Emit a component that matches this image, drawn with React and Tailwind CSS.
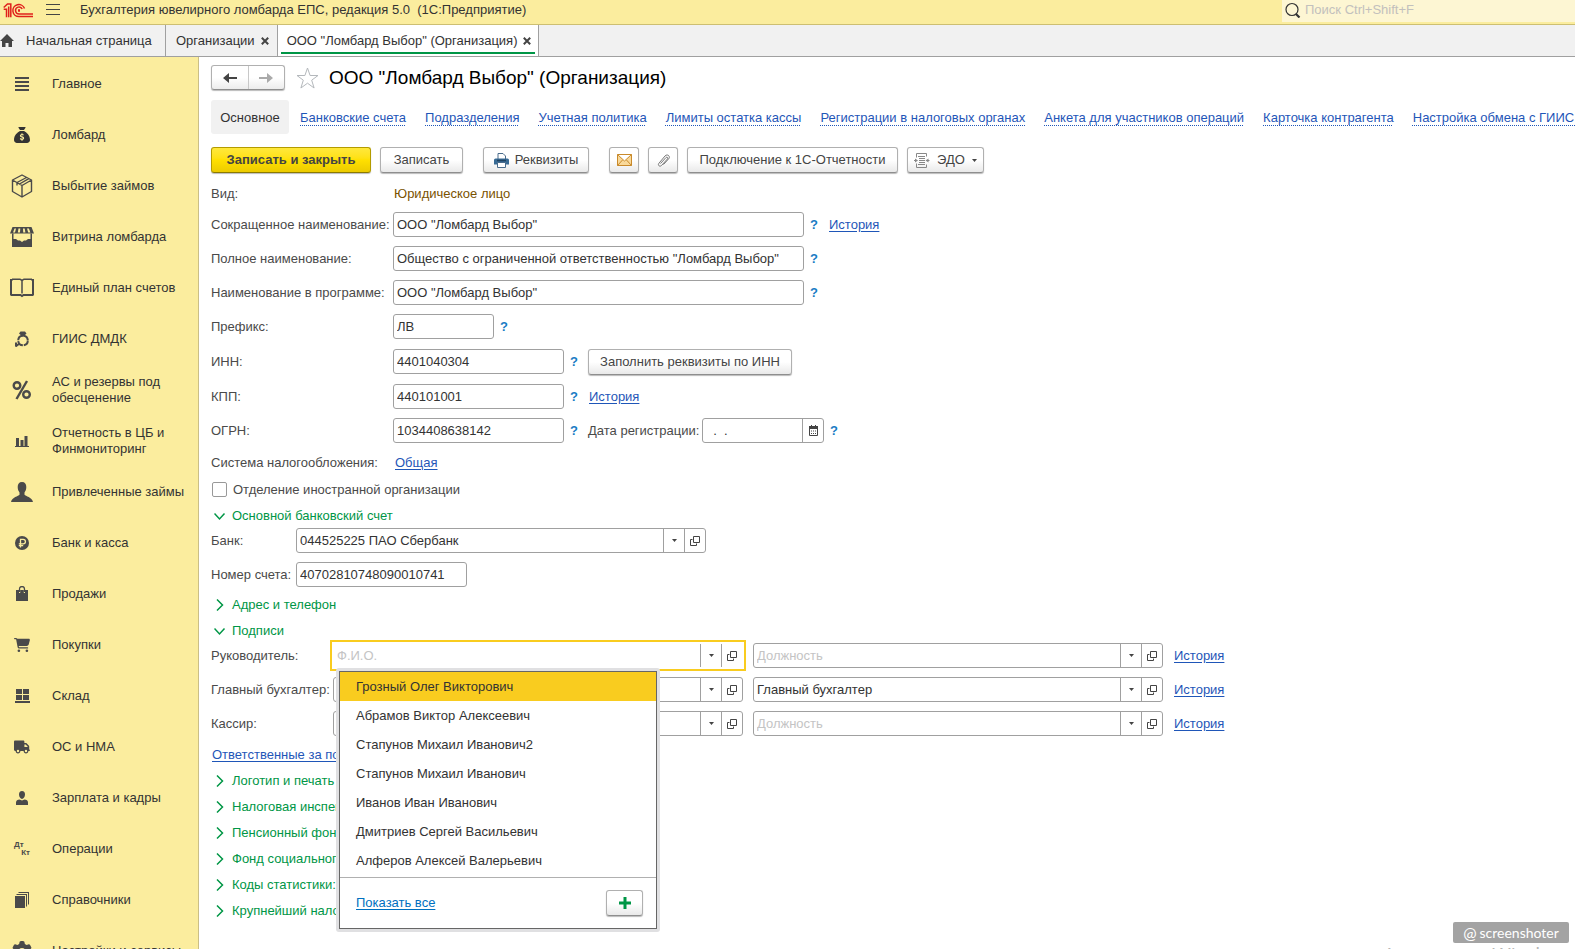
import { useState } from 'react';
import { FaCartShopping, FaGear, FaSackDollar, FaTruck } from 'react-icons/fa6';

const menu = [
  { label: 'Главное', icon: 'list' },
  { label: 'Ломбард', icon: 'sack' },
  { label: 'Выбытие займов', icon: 'box' },
  { label: 'Витрина ломбарда', icon: 'shop' },
  { label: 'Единый план счетов', icon: 'book' },
  { label: 'ГИИС ДМДК', icon: 'ring' },
  { label: 'АС и резервы под обесценение', icon: 'percent' },
  { label: 'Отчетность в ЦБ и Финмониторинг', icon: 'chart' },
  { label: 'Привлеченные займы', icon: 'bust' },
  { label: 'Банк и касса', icon: 'ruble' },
  { label: 'Продажи', icon: 'bag' },
  { label: 'Покупки', icon: 'cart' },
  { label: 'Склад', icon: 'stock' },
  { label: 'ОС и НМА', icon: 'truck' },
  { label: 'Зарплата и кадры', icon: 'person' },
  { label: 'Операции', icon: 'dtkt' },
  { label: 'Справочники', icon: 'books' },
  { label: 'Настройки и сервисы', icon: 'gear' },
];

const sections = [
  'Банковские счета',
  'Подразделения',
  'Учетная политика',
  'Лимиты остатка кассы',
  'Регистрации в налоговых органах',
  'Анкета для участников операций',
  'Карточка контрагента',
  'Настройка обмена с ГИИС ДМДК',
];

const people = [
  'Грозный Олег Викторович',
  'Абрамов Виктор Алексеевич',
  'Стапунов Михаил Иванович2',
  'Стапунов Михаил Иванович',
  'Иванов Иван Иванович',
  'Дмитриев Сергей Васильевич',
  'Алферов Алексей Валерьевич',
];

const closedGroups = [
  'Логотип и печать',
  'Налоговая инспекция',
  'Пенсионный фонд',
  'Фонд социального страхования',
  'Коды статистики:',
  'Крупнейший налогоплательщик',
];

function MenuIcon({ name }) {
  switch (name) {
    case 'sack':
      return <FaSackDollar className="size-4 text-[#333]" />;
    case 'cart':
      return <FaCartShopping className="size-4" />;
    case 'truck':
      return <FaTruck className="size-4" />;
    case 'gear':
      return <FaGear className="size-5" />;
    case 'list':
      return (
        <svg width="14" height="14" fill="currentColor">
          <path d="M0 0h14v2H0zM0 4h14v2H0zM0 8h14v2H0zM0 12h14v2H0z" />
        </svg>
      );
    case 'box':
      return (
        <svg width="22" height="24" fill="none" stroke="currentColor" strokeWidth="1.400" strokeLinejoin="round">
          <path d="M11 1l9.500 5v11.500L11 23l-9.500-5.500V6zM1.500 6L11 11.500 20.500 6M11 11.500V23M15.500 3.500L6 8.500v3M17.800 4.700L8.500 10" />
        </svg>
      );
    case 'shop':
      return (
        <svg width="24" height="20" fill="currentColor">
          <path
            fillRule="evenodd"
            d="M2.500 0h19L24 6.500H0zM4.500 1.500L3 5.500h2l1-4zM8.500 1.500l-.7 4H10l.3-4zM13 1.500l.2 4h2.200l-.7-4zM17 1.500l1.200 4h2.200l-1.500-4z"
          />
          <path d="M2 6.500h1.500V12H6l2 1.500h2l2 1.500 2-1.500h2l2-1.500h2.500V6.500H22V20H2z" />
        </svg>
      );
    case 'book':
      return (
        <svg width="24" height="20" fill="none" stroke="currentColor">
          <path d="M1 17.500V2h1.500M23 17.500V2h-1.500M1 17h9.500l1.500 1 1.500-1H23" strokeWidth="2" />
          <path d="M2 1.200h8l2 1.300 2-1.300h8M12 2v13.500" strokeWidth="1.500" />
        </svg>
      );
    case 'ring':
      return (
        <svg width="16" height="16" fill="none" stroke="currentColor" strokeWidth="2">
          <circle cx="9" cy="9.500" r="4.800" strokeDasharray="6.500 1" />
          <path d="M6.500.5h4.500L12.500 2.500 8.800 6 5 2.500z" fill="currentColor" stroke="none" />
          <path d="M5.500 12.500L1.500 15.500M2 11.500v4" />
        </svg>
      );
    case 'percent':
      return (
        <svg width="20" height="20" fill="none" stroke="currentColor" strokeWidth="2.400">
          <circle cx="5" cy="5.500" r="3.300" />
          <circle cx="14.500" cy="14.500" r="3.300" />
          <path d="M15 1L4.500 19" />
        </svg>
      );
    case 'chart':
      return (
        <svg width="14" height="12" fill="currentColor">
          <path d="M0 11h14v1H0zM1 3h3v8H1zM5.500 5h3v6h-3zM9.500 1h3v10h-3z" />
        </svg>
      );
    case 'bust':
      return (
        <svg width="22" height="20" fill="currentColor">
          <path d="M11 0c3 0 4.300 2 4.300 5 0 2.500-.8 4-1.800 5.500v2.200c1 1.600 7.500 2.300 8.500 7.300H0c1-5 7.500-5.700 8.500-7.300v-2.200C7.500 9 6.700 7.500 6.700 5c0-3 1.300-5 4.300-5z" />
        </svg>
      );
    case 'ruble':
      return (
        <svg width="14" height="14">
          <circle cx="7" cy="7" r="7" fill="currentColor" />
          <path d="M5.500 11.500V3.300h2.700a2.200 2.200 0 010 4.500H3.800M3.800 9.600h4.400" fill="none" stroke="#fbed9e" strokeWidth="1.300" />
        </svg>
      );
    case 'bag':
      return (
        <svg width="12" height="15" fill="currentColor">
          <path d="M0 4h3v3h1.200V4h3.600v3H9V4h3v11H0z" />
          <path d="M3.500 6V3a2.500 2.500 0 015 0v3" fill="none" stroke="currentColor" strokeWidth="1.300" />
        </svg>
      );
    case 'stock':
      return (
        <svg width="15" height="14" fill="currentColor">
          <path d="M1 0h6v5H1zM8 0h6v5H8zM1 6h6v5H1zM8 6h6v5H8zM0 12h15v2H0z" />
        </svg>
      );
    case 'person':
      return (
        <svg width="12" height="14" fill="currentColor">
          <path d="M6 0c2 0 3 1.300 3 3.500S7.500 8 6 8 3 5.700 3 3.500 4 0 6 0zM0 14v-2.500C0 9.500 1.500 8.500 3.500 8.500L6 9.500l2.500-1c2 0 3.500 1 3.500 3V14z" />
        </svg>
      );
    case 'dtkt':
      return (
        <span className="flex w-4 flex-col text-[8px] leading-[8px] font-bold">
          <span>Дт</span>
          <span className="self-end">Кт</span>
        </span>
      );
    default:
      return (
        <svg width="14" height="16" fill="currentColor">
          <path d="M0 4h10v12H0zM1.500 2H12v12.500h-1V3H1.500zM3.500 0H14v12.500h-1V1H3.500z" />
        </svg>
      );
  }
}

function Logo() {
  return (
    <svg width="30" height="15" viewBox="0 0 30 15" fill="none" stroke="#e0201c" strokeWidth="1.500" aria-label="1С">
      <path d="M.7 4.500L4.500 1h3.300v13.300M.7 6.200h2.800v8.100M5.700 3.500v10.800" />
      <path d="M21.500 5.500A6 6 0 1016 13.600h14" />
      <path d="M19.200 6A3.500 3.500 0 1016 11h14" />
      <path d="M15 7.500h2" strokeWidth="2.500" />
    </svg>
  );
}

const plain = 'border-[#b0b0b0] border-b-[#8e8e8e] bg-linear-to-b from-white from-50% to-[#e9e9e9] text-[#444]';
const primary = 'border-[#b39b00] border-b-[#8c7a00] bg-linear-to-b from-[#ffe83a] via-[#ffe000] to-[#eccb00] font-bold text-[#444]';

function Button({ className = '', look = plain, children, ...rest }) {
  return (
    <button
      type="button"
      className={`flex h-[26px] shrink-0 items-center justify-center rounded-[3px] border whitespace-nowrap shadow-[0_1px_1px_#bbb] ${look} ${className}`}
      {...rest}
    >
      {children}
    </button>
  );
}

function TextField({ className = '', ...rest }) {
  return (
    <input
      type="text"
      className={`h-[25px] rounded-[3px] border border-[#a0a0a0] bg-white px-[3px] text-[#333] outline-none ${className}`}
      {...rest}
    />
  );
}

function Caret() {
  return (
    <svg width="5" height="3" fill="#444">
      <path d="M0 0h5L2.500 3z" />
    </svg>
  );
}

const fieldBox = 'h-[25px] rounded-[3px] border border-[#a0a0a0]';

function PickerField({ box = fieldBox, className = '', ...rest }) {
  return (
    <div className={`flex min-w-0 bg-white ${box} ${className}`}>
      <input
        type="text"
        className="min-w-0 flex-1 bg-transparent px-[3px] text-[#333] outline-none placeholder:text-[#c4c4c4]"
        {...rest}
      />
      <button type="button" aria-label="Выбрать" className="flex w-[21px] items-center justify-center border-l border-[#a0a0a0]">
        <Caret />
      </button>
      <button type="button" aria-label="Открыть" className="flex w-[21px] items-center justify-center border-l border-[#a0a0a0]">
        <svg width="10" height="10" fill="none" stroke="#444">
          <path d="M3.500.5h6v6h-6zM2.500 3.500h-2v6h6v-2" />
        </svg>
      </button>
    </div>
  );
}

function Help() {
  return (
    <button type="button" className="w-5 text-center font-bold text-[#1a7cc4]">
      ?
    </button>
  );
}

function Link({ className = '', children }) {
  return (
    <a href="#" className={`text-[#1f56b8] underline underline-offset-2 ${className}`}>
      {children}
    </a>
  );
}

function Group({ open = false, className = '', children }) {
  return (
    <button type="button" className={`flex h-5 items-center text-[#009646] ${className}`} aria-expanded={open}>
      <span className="flex w-[21px] pl-[3px]">
        <svg width="12" height="12" fill="none" stroke="currentColor" strokeWidth="1.500">
          {open ? <path d="M.5 3.500L5.500 9l5-5.500" /> : <path d="M3 .5L8.500 6 3 11.500" />}
        </svg>
      </span>
      {children}
    </button>
  );
}

function Row({ label, id, className = '', labelClass = 'w-[182px]', children }) {
  return (
    <div className={`flex items-center ${className}`}>
      <label htmlFor={id} className={`shrink-0 whitespace-nowrap ${labelClass}`}>
        {label}
      </label>
      {children}
    </div>
  );
}

function PeoplePopup() {
  return (
    <div className="absolute top-[28px] left-[6px] z-10 w-[324px] rounded-[3px] bg-[#e0e0e2] p-[3px]">
      <div className="border border-[#666] bg-white">
        <ul role="listbox" aria-label="Физические лица" className="border-b border-[#b0b0b0] pb-[2px]">
          {people.map((name, i) => (
            <li
              key={name}
              role="option"
              aria-selected={i === 0}
              className={`flex h-[29px] items-center px-4 text-[#333] ${i === 0 ? 'bg-[#f9cc1f]' : ''}`}
            >
              {name}
            </li>
          ))}
        </ul>
        <div className="flex h-[50px] items-center justify-between pr-[13px] pl-4">
          <a href="#" className="text-[#0070c0] underline underline-offset-2">
            Показать все
          </a>
          <Button className="w-[37px]" aria-label="Добавить">
            <svg width="12" height="12" fill="#009646">
              <path d="M4.500 0h3v4.500H12v3H7.500V12h-3V7.500H0v-3h4.500z" />
            </svg>
          </Button>
        </div>
      </div>
    </div>
  );
}

function Tab({ active = false, children }) {
  return (
    <div className={`flex flex-col border-r border-[#a0a0a0] ${active ? 'bg-white px-[3px]' : 'pr-2 pl-[10px]'}`}>
      <div className={`flex flex-1 items-center gap-[6px] ${active ? 'pt-1 pr-1 pl-[6px]' : ''}`}>
        <span>{children}</span>
        <button type="button" aria-label="Закрыть">
          <svg width="8" height="8" stroke="#444" strokeWidth="2">
            <path d="M.8.8l6.400 6.400M7.200.8L.8 7.200" />
          </svg>
        </button>
      </div>
      {active && <div className="mb-[2px] h-[2px] bg-[#009646]" />}
    </div>
  );
}

export default function App() {
  const [foreign, setForeign] = useState(false);

  return (
    <div className="relative flex h-screen flex-col overflow-hidden bg-white font-['Liberation_Sans',Arial,sans-serif] text-[13px] leading-4 text-[#4a4a4a]">
      <header className="flex h-[25px] shrink-0 items-start justify-between border-b border-[#cdbf72] bg-[#fbed9e]">
        <div className="flex h-5 items-center pl-[3px]">
          <Logo />
          <button type="button" aria-label="Меню" className="ml-[13px]">
            <svg width="14" height="12" fill="#444">
              <path d="M0 0h14v1H0zM0 5h14v1H0zM0 10h14v1H0z" />
            </svg>
          </button>
          <span className="ml-5 whitespace-pre text-[#333]">{'Бухгалтерия ювелирного ломбарда ЕПС, редакция 5.0  (1С:Предприятие)'}</span>
        </div>
        <label className="flex h-[22px] w-[293px] items-center gap-1 bg-[#fdf6d3] pb-[2px] pl-[3px]">
          <svg width="16" height="16" fill="none" stroke="#333">
            <circle cx="7" cy="7.500" r="6" strokeWidth="1.200" />
            <path d="M11 12l3.500 3.500" strokeWidth="2.200" />
          </svg>
          <input type="search" placeholder="Поиск Ctrl+Shift+F" aria-label="Поиск" className="min-w-0 flex-1 outline-none placeholder:text-[#c2c0bd]" />
        </label>
      </header>

      <nav className="flex h-8 shrink-0 border-b border-[#a0a0a0] bg-[#f1f1f1] text-[#333]">
        <a href="#" className="flex w-[166px] items-center gap-3 border-r border-[#a0a0a0]">
          <svg width="14" height="13" fill="#444">
            <path d="M7 0l7 7h-2v6H8.500V9h-3v4H2V7H0z" />
          </svg>
          Начальная страница
        </a>
        <Tab>Организации</Tab>
        <Tab active>ООО "Ломбард Выбор" (Организация)</Tab>
      </nav>

      <div className="flex min-h-0 flex-1">
        <aside className="w-[199px] shrink-0 overflow-hidden border-r border-[#cbbf86] bg-[#fbed9e] pt-px">
          {menu.map((item) => (
            <a key={item.label} href="#" className="flex h-[51px] items-center text-[#333]">
              <span className="flex w-11 shrink-0 justify-center text-[#4a4a4a]">
                <MenuIcon name={item.icon} />
              </span>
              <span className="flex-1 pl-2">{item.label}</span>
            </a>
          ))}
        </aside>

        <main className="flex min-w-0 flex-1 flex-col items-start overflow-hidden pt-2 pl-3">
          <div className="flex h-[25px] items-center">
            <div className="flex h-[25px] w-[74px] rounded-[3px] border border-[#b0b0b0] border-b-[#8e8e8e] bg-linear-to-b from-white from-50% to-[#ececec] shadow-[0_1px_1px_#bbb]">
              <button type="button" aria-label="Назад" className="flex flex-1 items-center justify-center border-r border-[#c8c8c8]">
                <svg width="14" height="10" fill="#444">
                  <path d="M0 5l6-5v4h8v2H6v4z" />
                </svg>
              </button>
              <button type="button" aria-label="Вперед" className="flex flex-1 items-center justify-center">
                <svg width="14" height="10" fill="#aaa">
                  <path d="M14 5L8 0v4H0v2h8v4z" />
                </svg>
              </button>
            </div>
            <button type="button" aria-label="В избранное" className="mr-[10px] ml-[11px]">
              <svg width="23" height="22" fill="none" stroke="#b4b8bc">
                <path d="M11.500 1l2.600 7.500h7.900l-6.300 4.700 2.400 7.800-6.600-4.800L4.900 21l2.400-7.800L1 8.500h7.900z" />
              </svg>
            </button>
            <h1 className="text-[19px] leading-6 whitespace-nowrap text-black">ООО "Ломбард Выбор" (Организация)</h1>
          </div>

          <nav className="mt-[10px] flex h-[34px] items-center gap-[19px] whitespace-nowrap">
            <a href="#" className="-mr-2 flex h-[34px] w-[78px] items-center justify-center rounded-[3px] bg-[#f1f1f1] pt-px text-[#333]">
              Основное
            </a>
            {sections.map((s) => (
              <a key={s} href="#" className="pt-px text-[#1f56b8] underline decoration-dotted decoration-1 underline-offset-3">
                {s}
              </a>
            ))}
          </nav>

          <div className="mt-[13px] flex gap-[9px]">
            <Button look={primary} className="w-[160px]">
              Записать и закрыть
            </Button>
            <Button className="w-[83px]">Записать</Button>
            <Button className="ml-[11px] w-[106px] gap-[6px]">
              <svg width="15" height="15">
                <path d="M4 6V.5h5L11.500 3v3" fill="#fff" stroke="#4a6c8c" />
                <path d="M1.500 5.500h12A1.500 1.500 0 0115 7v4.500H0V7a1.500 1.500 0 011.500-1.500z" fill="#386a94" />
                <path d="M3 7.500h9" stroke="#1f4260" strokeWidth="1.500" />
                <path d="M3.500 9.500h8v5h-8z" fill="#fff" stroke="#4a6c8c" />
              </svg>
              Реквизиты
            </Button>
            <Button className="ml-[11px] w-[30px]" aria-label="Письмо">
              <svg width="15" height="12" fill="#f9d99a" stroke="#c98a2b">
                <path d="M.5.5h14v11H.5zM.5.5l7 6.500 7-6.500M.5 11.500l5-5.500M14.500 11.500L9.500 6" />
              </svg>
            </Button>
            <Button className="w-[30px]" aria-label="Присоединенные файлы">
              <svg width="15" height="15" fill="none" stroke="#777">
                <path d="M4.500 10.500L10 4.500c1-1 2.500.3 1.500 1.400L5.500 12.500c-1.700 1.700-4.200-.3-2.600-2.200L9 3c2.400-2.600 5.800.3 3.700 2.800L7.500 11.500" />
              </svg>
            </Button>
            <Button className="w-[211px]">Подключение к 1С-Отчетности</Button>
            <Button className="w-[77px] gap-[7px]">
              <svg width="16" height="15" fill="none" stroke="#888">
                <path d="M2.500 4.500v-4h10v3M2.500 10.500v4h10v-3M4 3.500h7M5 5.500h6M5 7.500h6M5 9.500h6M4 11.500h7M0 7.500h3M12.500 7.500h3" />
                <path d="M1 5.500l3 2-3 2zM14.500 5.500l-3 2 3 2z" fill="#888" stroke="none" />
              </svg>
              ЭДО
              <Caret />
            </Button>
          </div>

          <div className="mt-[10px] flex h-[21px] items-center">
            <span className="w-[183px]">Вид:</span>
            <span className="text-[#7a5200]">Юридическое лицо</span>
          </div>

          <div className="mt-2 flex flex-col gap-[9px]">
            <Row label="Сокращенное наименование:" id="short">
              <TextField id="short" className="w-[411px]" defaultValue={'ООО "Ломбард Выбор"'} />
              <Help />
              <Link className="ml-[5px]">История</Link>
            </Row>
            <Row label="Полное наименование:" id="full">
              <TextField id="full" className="w-[411px]" defaultValue={'Общество с ограниченной ответственностью "Ломбард Выбор"'} />
              <Help />
            </Row>
            <Row label="Наименование в программе:" id="program">
              <TextField id="program" className="w-[411px]" defaultValue={'ООО "Ломбард Выбор"'} />
              <Help />
            </Row>
            <Row label="Префикс:" id="prefix">
              <TextField id="prefix" className="w-[101px]" defaultValue="ЛВ" />
              <Help />
            </Row>
            <Row label="ИНН:" id="inn" className="h-[27px]">
              <TextField id="inn" className="w-[171px]" defaultValue="4401040304" />
              <Help />
              <Button className="ml-1 w-[204px]">Заполнить реквизиты по ИНН</Button>
            </Row>
            <Row label="КПП:" id="kpp">
              <TextField id="kpp" className="w-[171px]" defaultValue="440101001" />
              <Help />
              <Link className="ml-[5px]">История</Link>
            </Row>
            <Row label="ОГРН:" id="ogrn">
              <TextField id="ogrn" className="w-[171px]" defaultValue="1034408638142" />
              <Help />
              <label htmlFor="regdate" className="ml-1 w-[114px]">
                Дата регистрации:
              </label>
              <div className="flex h-[25px] w-[122px] rounded-[3px] border border-[#a0a0a0]">
                <input id="regdate" type="text" defaultValue="  .  ." className="min-w-0 flex-1 px-[3px] text-[#333] outline-none" />
                <button type="button" aria-label="Календарь" className="flex w-[21px] items-center justify-center border-l border-[#a0a0a0]">
                  <svg width="9" height="11" fill="none" stroke="#444">
                    <path d="M.5 2.500h8v8h-8zM2.500 0v2M6.500 0v2" />
                    <path d="M0 2.500h9" strokeWidth="3" />
                    <path d="M2 6h5M2 8.500h5" strokeDasharray="1 1" />
                  </svg>
                </button>
              </div>
              <Help />
            </Row>
          </div>

          <div className="mt-[9px] flex h-[21px] items-center">
            <span className="w-[184px]">Система налогообложения:</span>
            <Link>Общая</Link>
          </div>
          <label className="mt-2 flex h-[17px] items-center gap-[6px] pl-px">
            <input
              type="checkbox"
              checked={foreign}
              onChange={(e) => setForeign(e.target.checked)}
              className="size-[15px] appearance-none rounded-[2px] border border-[#999] bg-white"
            />
            Отделение иностранной организации
          </label>

          <Group open className="mt-2">
            Основной банковский счет
          </Group>
          <div className="mt-[2px] flex flex-col gap-[9px]">
            <Row label="Банк:" id="bank" labelClass="w-[85px]">
              <PickerField id="bank" className="w-[410px]" defaultValue="044525225 ПАО Сбербанк" />
            </Row>
            <Row label="Номер счета:" id="account" labelClass="w-[85px]">
              <TextField id="account" className="w-[171px]" defaultValue="40702810748090010741" />
            </Row>
          </div>

          <Group className="mt-2">Адрес и телефон</Group>
          <Group open className="mt-[6px]">
            Подписи
          </Group>
          <div className="-mt-px grid grid-cols-[119px_416px_417px_auto] items-center">
            <label htmlFor="head">Руководитель:</label>
            <div className="relative">
              <PickerField id="head" box="h-[31px] border-2 border-[#f9cc1f] p-[2px]" placeholder="Ф.И.О." />
              <PeoplePopup />
            </div>
            <PickerField aria-label="Должность руководителя" className="ml-[7px]" placeholder="Должность" />
            <Link className="ml-[11px]">История</Link>

            <label htmlFor="chief" className="whitespace-nowrap">
              Главный бухгалтер:
            </label>
            <PickerField id="chief" className="mx-[3px] my-[6px]" />
            <PickerField aria-label="Должность бухгалтера" className="ml-[7px]" defaultValue="Главный бухгалтер" />
            <Link className="ml-[11px]">История</Link>

            <label htmlFor="cashier">Кассир:</label>
            <PickerField id="cashier" className="mx-[3px] my-[3px]" />
            <PickerField aria-label="Должность кассира" className="ml-[7px]" placeholder="Должность" />
            <Link className="ml-[11px]">История</Link>
          </div>

          <div className="mt-[6px] flex h-5 items-center pl-px">
            <Link>Ответственные за подготовку отчетности</Link>
          </div>
          <div className="mt-[6px] flex flex-col items-start gap-[6px]">
            {closedGroups.map((g) => (
              <Group key={g}>{g}</Group>
            ))}
          </div>
        </main>
      </div>

      <div className="pointer-events-none absolute top-full right-0 -mt-[6px] w-[192px] font-['Open_Sans',sans-serif] text-[20px] leading-6 whitespace-nowrap text-[#b5b5b5]">
        Активация Windows
      </div>
      <div className="pointer-events-none absolute right-[6px] bottom-[6px] flex h-[21px] w-[116px] items-center justify-center gap-[3px] rounded-[2px] bg-[#a3a3a3] font-['Lato',sans-serif] text-sm leading-4 text-white">
        <span className="text-base leading-4">@</span>
        screenshoter
      </div>
    </div>
  );
}
